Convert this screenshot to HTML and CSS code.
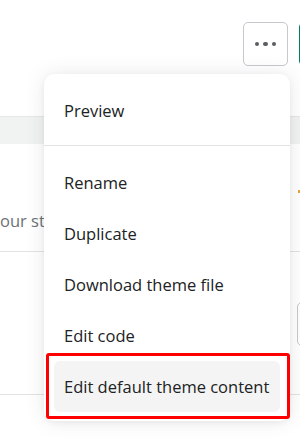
FILE: index.html
```html
<!DOCTYPE html>
<html>
<head>
<meta charset="utf-8">
<link rel="stylesheet" href="styles.css">
</head>
<body>
<div class="page">
  <div class="header">
    <button class="more-btn" aria-label="More actions">
      <span class="dot"></span><span class="dot"></span><span class="dot"></span>
    </button>
    <button class="primary-btn" aria-label="Customize"></button>
  </div>
  <div class="band"></div>
  <div class="row row-one">
    <span class="muted">our store</span>
    <span class="warn"></span>
  </div>
  <div class="row row-two">
    <span class="side-box"></span>
  </div>

  <div class="menu">
    <div class="section">
      <div class="item">Preview</div>
    </div>
    <div class="section divided">
      <div class="item">Rename</div>
      <div class="item">Duplicate</div>
      <div class="item">Download theme file</div>
      <div class="item">Edit code</div>
      <div class="item active">Edit default theme content</div>
    </div>
  </div>
  <div class="annotation"></div>
</div>
</body>
</html>
```

FILE: styles.css
```css
* { box-sizing: border-box; }
html, body {
  margin: 0;
  padding: 0;
  background: #ffffff;
}
body {
  font-family: "Open Sans", "Noto Sans", sans-serif;
  color: #202223;
  width: 300px;
  height: 440px;
  overflow: hidden;
}
.page {
  position: relative;
  width: 300px;
  height: 440px;
  overflow: hidden;
}
.header {
  height: 116px;
  display: flex;
  align-items: flex-start;
  gap: 11px;
  padding: 22px 0 0 243px;
}
.more-btn {
  flex: none;
  width: 45px;
  height: 44px;
  border: 1px solid #c5c8cc;
  border-radius: 5px;
  background: #ffffff;
  display: flex;
  align-items: center;
  justify-content: center;
  gap: 4px;
  padding: 0;
}
.dot {
  width: 4.5px;
  height: 4.5px;
  border-radius: 50%;
  background: #5c5f62;
}
.primary-btn {
  flex: none;
  width: 90px;
  height: 44px;
  border: 1px solid #008060;
  border-radius: 5px;
  background: #ffffff;
  padding: 0;
}
.band {
  height: 28px;
  background: #f1f2f2;
  border-top: 1px solid #e6e7e8;
}
.row {
  position: relative;
  border-bottom: 1px solid #e1e3e5;
}
.row-one {
  height: 108px;
  display: flex;
  align-items: center;
  justify-content: space-between;
}
.muted {
  font-size: 16.5px;
  color: #6d7175;
  margin-top: 46px;
  white-space: nowrap;
}
.warn {
  width: 4px;
  height: 3px;
  background: #e8a33b;
  margin-top: -12px;
  margin-right: -2px;
}
.row-two {
  height: 143px;
  display: flex;
  justify-content: flex-end;
  align-items: flex-start;
  padding-top: 50px;
}
.side-box {
  width: 30px;
  height: 44px;
  border: 1px solid #c5c8cc;
  border-radius: 5px;
  margin-right: -27px;
}
.menu {
  position: absolute;
  left: 44px;
  top: 74px;
  width: 246px;
  background: #ffffff;
  border-radius: 10px;
  box-shadow: 0 0 22px rgba(0, 0, 0, 0.09), 0 2px 6px rgba(0, 0, 0, 0.05);
}
.section {
  padding: 11px 10px 9px;
}
.section.divided {
  border-top: 1px solid #e1e3e5;
}
.item {
  height: 51px;
  display: flex;
  align-items: center;
  padding-left: 10px;
  border-radius: 6px;
  font-size: 16.5px;
  white-space: nowrap;
}
.item.active {
  background: #f4f4f4;
}
.annotation {
  position: absolute;
  left: 46px;
  top: 353px;
  width: 244px;
  height: 66px;
  border: 3px solid #ff0000;
  border-radius: 3px;
}
```
